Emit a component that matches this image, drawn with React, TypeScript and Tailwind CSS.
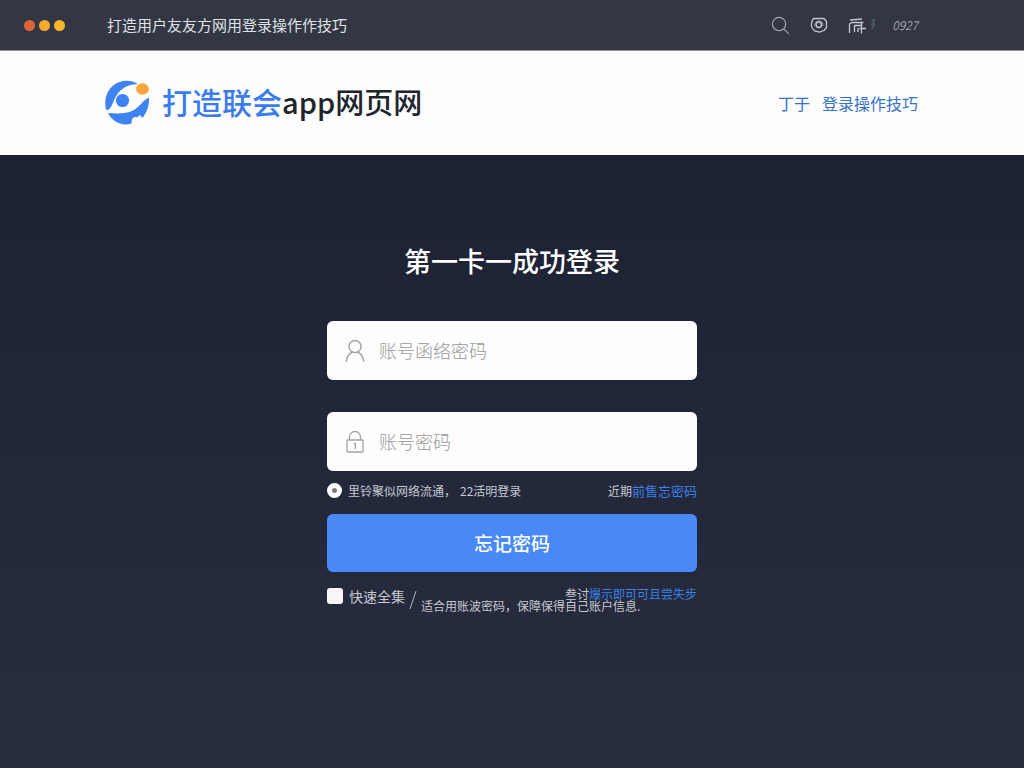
import React from "react";

function SearchIcon() {
  return (
    <svg width="19" height="19" viewBox="0 0 20 20" fill="none" stroke="#a3a7b0" strokeWidth="1.2" strokeLinecap="round" aria-hidden="true">
      <circle cx="8.5" cy="8.5" r="7" />
      <path d="M14 14l4.500 4.500" />
    </svg>
  );
}

function TargetIcon() {
  return (
    <svg width="18" height="18" viewBox="0 0 18 18" fill="none" stroke="#c3c6cc" strokeWidth="1.3" strokeLinejoin="round" aria-hidden="true">
      <path d="M3.500 2.500H14L16.500 5.500V11.500L14 14.500L9.500 16.200L4.500 14.800Q1.300 12 1.300 9Q1.300 5.500 3.500 2.500Z" />
      <circle cx="8.800" cy="8.800" r="2.700" strokeWidth="1.500" />
      <path d="M4.800 10.500Q4 5.500 8.800 4.800Q13.500 5.300 13 10" strokeWidth="0.600" />
    </svg>
  );
}

function GateIcon() {
  return (
    <svg width="28" height="18" viewBox="0 0 28 18" fill="none" stroke="#c3c6cc" strokeWidth="1.300" aria-hidden="true">
      <path d="M2 4L14 3M1.500 17V8L4 6.500H15.500M6.500 16V9.500H13.500M13.500 6.500V17.500M10 12V16M11.500 12.500H18" />
      <path d="M24 5L26 3.500V10L23.500 12.500M23 8H26" stroke="#50636c" />
    </svg>
  );
}

function Logo() {
  return (
    <svg width="46" height="46" viewBox="0 0 46 46" aria-hidden="true">
      <path fill="#3f83f3" d="M2 30C-1.500 15 7 2.500 20 1C26 .300 31 2 34.500 4.500C26 3.500 17 8 12.500 15.500C9 21 8.500 26 5 29.500Z" />
      <circle cx="18.500" cy="20.500" r="6.600" fill="#3f83f3" />
      <path fill="#3f83f3" d="M45 17.500C45.500 26 42.500 33 38.500 38L36 35L33 37.500C29.500 36 27.500 38 27.500 43.500C17 46.500 8.500 41.500 4 33C12 33.500 20 34 28 31C36 27.500 38.500 20 45 17.500Z" />
      <ellipse cx="38.500" cy="9" rx="6.400" ry="5.800" fill="#faa53a" />
    </svg>
  );
}

function UserIcon() {
  return (
    <svg width="20" height="24" viewBox="0 0 20 24" fill="none" stroke="#a2a2a2" strokeWidth="1.400" strokeLinecap="round" aria-hidden="true">
      <circle cx="10" cy="7.500" r="6" />
      <path d="M1.200 22.500C2 17.500 4 14.500 7.500 13M12.500 13C16 14.500 18 17.500 18.800 22.500" />
    </svg>
  );
}

function LockIcon() {
  return (
    <svg width="20" height="24" viewBox="0 0 20 24" fill="none" stroke="#a2a2a2" strokeWidth="1.300" aria-hidden="true">
      <rect x="2" y="10" width="16" height="12" rx="0.500" />
      <path d="M4.500 10V7A5.500 5.500 0 0 1 15.500 7V10" />
      <path d="M8.800 14L10.300 13.500V19" />
    </svg>
  );
}

type FieldProps = { id: string; label: string; type: string; icon: React.ReactNode };

function Field({ id, label, type, icon }: FieldProps) {
  return (
    <label htmlFor={id} className="flex h-[59px] items-center gap-3.5 rounded-md bg-[#fdfdfd] px-[18px]">
      {icon}
      <input
        id={id}
        type={type}
        aria-label={label}
        placeholder={label}
        className="h-full min-w-0 flex-1 bg-transparent pb-0.5 text-lg font-light text-gray-800 outline-none placeholder:text-[#999999]"
      />
    </label>
  );
}

export default function App() {
  return (
    <div className="flex min-h-screen flex-col bg-gradient-to-b from-[#191e31] to-[#282d40] font-['Noto_Sans_CJK_SC',sans-serif]">
      <div className="flex h-[51px] items-center border-b border-[#8c8f98] bg-[#333744] pr-[106px] pl-6">
        <div className="flex w-[83px] gap-1">
          <span className="size-[11px] rounded-full bg-[#e06435]" />
          <span className="size-[11px] rounded-full bg-[#f6ab2f]" />
          <span className="size-[11px] rounded-full bg-[#f8b62b]" />
        </div>
        <span className="flex-1 text-[15px] text-[#dfe1e5]">打造用户友友方网用登录操作作技巧</span>
        <div className="flex items-center">
          <button aria-label="搜索" className="mr-5"><SearchIcon /></button>
          <button aria-label="设置" className="mr-5"><TargetIcon /></button>
          <button aria-label="菜单" className="mr-4"><GateIcon /></button>
          <span className="text-xs font-light text-[#c0c3ca] italic">0927</span>
        </div>
      </div>

      <header className="flex h-[104px] items-center justify-between bg-[#fdfdfd] pr-[106px] pl-[104px]">
        <div className="flex items-center gap-3">
          <Logo />
          <h1 className="mb-1 flex items-baseline leading-none font-medium">
            <span className="text-[30px] text-[#3a7cee]">打造联会</span>
            <span className="text-[29px] text-[#20242b]">app网页网</span>
          </h1>
        </div>
        <nav className="flex gap-3 text-base text-[#3672c8]">
          <a href="#start">丁于</a>
          <a href="#tips">登录操作技巧</a>
        </nav>
      </header>

      <main className="mx-auto w-full max-w-[370px] flex-1 pt-[86px]">
        <h2 className="text-center text-[27px] leading-10 font-medium text-white">第一卡一成功登录</h2>
        <form className="mt-10" onSubmit={(e) => e.preventDefault()}>
          <div className="flex flex-col gap-8">
            <Field id="account" label="账号函络密码" type="text" icon={<UserIcon />} />
            <Field id="password" label="账号密码" type="password" icon={<LockIcon />} />
          </div>

          <div className="flex h-[43px] items-center justify-between pb-1 text-xs text-[#c5c9d1]">
            <div className="flex items-center gap-1.5">
              <input
                id="network"
                type="radio"
                className="size-[15px] appearance-none rounded-full border-[5px] border-white bg-[#777a80]"
              />
              <label htmlFor="network" className="flex gap-1">
                <span>里铃聚似网络流通，</span>
                <span>22活明登录</span>
              </label>
            </div>
            <span className="flex items-baseline">
              近期
              <a href="#forgot" className="text-[13px] text-[#3c80e8]">前售忘密码</a>
            </span>
          </div>

          <button type="submit" className="h-[58px] w-full rounded-md bg-[#4889f5] text-[19px] font-medium text-white">
            忘记密码
          </button>

          <div className="grid h-12 pt-3 text-xs leading-5 text-[#c5c9d1]">
            <div className="col-start-1 row-start-1 flex items-start">
              <div className="flex items-center gap-1.5 pt-0.5">
                <input
                  id="remember"
                  type="checkbox"
                  className="size-4 appearance-none rounded-[3px] bg-[#f7f7f8]"
                />
                <label htmlFor="remember" className="text-[14px] leading-5">快速全集</label>
              </div>
              <svg className="mt-1.5 ml-1 shrink-0" width="8" height="20" viewBox="0 0 8 20" fill="none" stroke="#aeb2bb" aria-hidden="true">
                <path d="M7 1L1 19" />
              </svg>
              <p className="mt-3 ml-1 whitespace-nowrap">适合用账波密码，保障保得自己账户信息.</p>
            </div>
            <span className="col-start-1 row-start-1 self-start justify-self-end">
              叁讨<a href="#trial" className="text-[#3c80e8]">爆示即可可且尝失步</a>
            </span>
          </div>
        </form>
      </main>
    </div>
  );
}
